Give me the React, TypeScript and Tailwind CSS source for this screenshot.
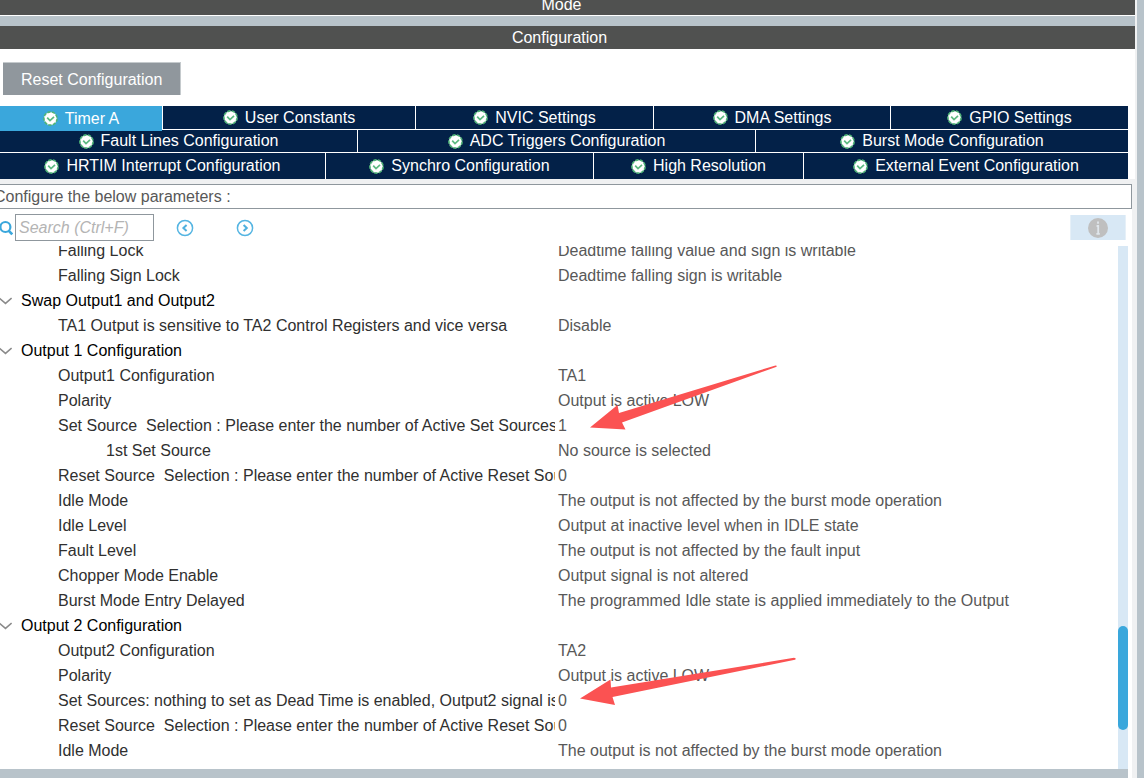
import { Fragment } from "react";
import clsx from "clsx";

type Tab = { label: string; size: string; active?: boolean };

const tabRows: { className: string; tabs: Tab[] }[] = [
  {
    className: "h-[23px]",
    tabs: [
      { label: "Timer A", size: "grow-[162]", active: true },
      { label: "User Constants", size: "grow-[252]" },
      { label: "NVIC Settings", size: "grow-[237]" },
      { label: "DMA Settings", size: "grow-[236]" },
      { label: "GPIO Settings", size: "grow-[237]" },
    ],
  },
  {
    className: "h-[22px]",
    tabs: [
      { label: "Fault Lines Configuration", size: "grow-[357]" },
      { label: "ADC Triggers Configuration", size: "grow-[397]" },
      { label: "Burst Mode Configuration", size: "grow-[372]" },
    ],
  },
  {
    className: "h-[26px]",
    tabs: [
      { label: "HRTIM Interrupt Configuration", size: "grow-[325]" },
      { label: "Synchro Configuration", size: "grow-[267]" },
      { label: "High Resolution", size: "grow-[209]" },
      { label: "External Event Configuration", size: "grow-[324]" },
    ],
  },
];

type Row = { name: string; value?: string; group?: boolean; nested?: boolean };

const rows: Row[] = [
  { name: "Falling Lock", value: "Deadtime falling value and sign is writable" },
  { name: "Falling Sign Lock", value: "Deadtime falling sign is writable" },
  { name: "Swap Output1 and Output2", group: true },
  { name: "TA1 Output is sensitive to TA2 Control Registers and vice versa", value: "Disable" },
  { name: "Output 1 Configuration", group: true },
  { name: "Output1 Configuration", value: "TA1" },
  { name: "Polarity", value: "Output is active LOW" },
  { name: "Set Source  Selection : Please enter the number of Active Set Sources", value: "1" },
  { name: "1st Set Source", value: "No source is selected", nested: true },
  { name: "Reset Source  Selection : Please enter the number of Active Reset Sources", value: "0" },
  { name: "Idle Mode", value: "The output is not affected by the burst mode operation" },
  { name: "Idle Level", value: "Output at inactive level when in IDLE state" },
  { name: "Fault Level", value: "The output is not affected by the fault input" },
  { name: "Chopper Mode Enable", value: "Output signal is not altered" },
  { name: "Burst Mode Entry Delayed", value: "The programmed Idle state is applied immediately to the Output" },
  { name: "Output 2 Configuration", group: true },
  { name: "Output2 Configuration", value: "TA2" },
  { name: "Polarity", value: "Output is active LOW" },
  { name: "Set Sources: nothing to set as Dead Time is enabled, Output2 signal is c", value: "0" },
  { name: "Reset Source  Selection : Please enter the number of Active Reset Sour", value: "0" },
  { name: "Idle Mode", value: "The output is not affected by the burst mode operation" },
];

function CheckBadge() {
  return (
    <svg viewBox="0 0 15 15" className="size-[15px] shrink-0" aria-hidden="true">
      <circle cx="7.5" cy="7.5" r="6.6" fill="#fff" stroke="#4fb477" strokeWidth="1.6" strokeDasharray="3.4 1.2" />
      <path d="M4.2 6.6 L7 9.6 L11 5.8" fill="none" stroke="#5cb980" strokeWidth="1.7" />
    </svg>
  );
}

function SearchIcon() {
  return (
    <svg viewBox="0 0 16 16" className="-ml-[3px] size-4 shrink-0" aria-hidden="true">
      <circle cx="8.4" cy="7" r="5" fill="none" stroke="#3aa7dc" strokeWidth="2.2" />
      <path d="M11.6 10.6 L15.2 14.4" stroke="#3aa7dc" strokeWidth="2.6" />
    </svg>
  );
}

function CircleArrow({ d }: { d: string }) {
  return (
    <svg viewBox="0 0 18 18" className="size-[18px]" aria-hidden="true">
      <circle cx="9" cy="9" r="7.6" fill="none" stroke="#55b5e2" strokeWidth="1.5" />
      <path d={d} fill="none" stroke="#4fb0de" strokeWidth="2" />
    </svg>
  );
}

function InfoIcon() {
  return (
    <svg viewBox="0 0 20 20" className="size-5" aria-hidden="true">
      <circle cx="10" cy="10" r="10" fill="#bfbfbf" />
      <path d="M10 3.4v2.4M8.6 8H10.2V15.6M8.4 15.8h3.4" fill="none" stroke="#e0e6eb" strokeWidth="1.8" />
    </svg>
  );
}

function Chevron() {
  return (
    <svg viewBox="0 0 14 8" className="-ml-0.5 h-2 w-3.5 shrink-0" aria-hidden="true">
      <path d="M1 1 L7.5 6.4 L13.6 1" fill="none" stroke="#8a8a8a" strokeWidth="1.5" />
    </svg>
  );
}

function Tabs() {
  return (
    <div role="tablist" className="mr-[7px] flex flex-col gap-px">
      {tabRows.map((row) => (
        <div key={row.tabs[0].label} className={clsx("flex gap-px", row.className)}>
          {row.tabs.map((tab) => (
            <button
              key={tab.label}
              type="button"
              role="tab"
              aria-selected={!!tab.active}
              className={clsx(
                "flex basis-0 items-center justify-center gap-[7px] whitespace-nowrap text-white",
                tab.size,
                tab.active ? "z-10 h-[25px] bg-[#3aa7dc]" : "bg-[#032148]"
              )}
            >
              <CheckBadge />
              {tab.label}
            </button>
          ))}
        </div>
      ))}
    </div>
  );
}

function Parameters() {
  return (
    <div className="relative grow overflow-hidden pb-1.5">
      <table className="-mt-2 w-full table-fixed border-collapse text-left">
        <colgroup>
          <col className="w-[558px]" />
          <col />
        </colgroup>
        <tbody>
          {rows.map((row, i) => (
            <Fragment key={i}>
              {row.group ? (
                <tr className="h-[25px]">
                  <th colSpan={2} scope="colgroup" className="p-0 font-normal text-black">
                    <div className="flex items-center gap-[9px]">
                      <Chevron />
                      {row.name}
                    </div>
                  </th>
                </tr>
              ) : (
                <tr className="h-[25px]">
                  <th scope="row" className="p-0 font-normal text-[#303030]">
                    <div
                      className={clsx(
                        "mr-[3px] overflow-hidden whitespace-pre",
                        row.nested ? "pl-[106px]" : "pl-[58px]"
                      )}
                    >
                      {row.name}
                    </div>
                  </th>
                  <td className="whitespace-nowrap p-0 text-[#585858]">{row.value}</td>
                </tr>
              )}
            </Fragment>
          ))}
        </tbody>
      </table>

      {/* pointers to the active source counts */}
      <svg
        viewBox="0 0 1118 523"
        className="pointer-events-none absolute left-0 top-0 h-[523px] w-[1118px]"
        fill="#fb5252"
        aria-hidden="true"
      >
        <path d="M590 181.5 L617.5 159 L619 167 L775.5 119.4 Q778 119.6 776 121 L622 176.5 L625.5 183.5 Z" />
        <path d="M580 452.5 L610.5 433.5 L611 441.5 L794 411.8 Q797 412.4 795 413.8 L612.5 451 L615 459 Z" />
      </svg>
    </div>
  );
}

export default function App() {
  return (
    <div className="flex min-h-screen overflow-hidden bg-[#b8c3ca] font-['Liberation_Sans',Arial,sans-serif] text-base leading-6">
      <main className="mr-[7px] flex min-w-0 grow flex-col bg-[#f0f1f2]">
        <div className="mr-0.5">
          <div className="flex h-4 items-end justify-center overflow-hidden border-b border-white bg-[#505150] pr-3 text-white">
            <h2 className="leading-5">Mode</h2>
          </div>
          <div className="h-2.5 bg-[#b8c3ca]" />
          <div className="flex h-[23px] items-end justify-center bg-[#505150] pr-4 text-white">
            <h2 className="leading-[22px]">Configuration</h2>
          </div>
          <div className="bg-white pt-[13px]">
            <button
              type="button"
              className="ml-[3px] flex h-[33px] items-center border-r border-t border-[#c5cacd] bg-[#90979d] px-[18px] pt-px text-white"
            >
              Reset Configuration
            </button>
            <div className="h-[11px]" />
            <Tabs />
          </div>
        </div>

        <div className="mr-[5px] mt-[5px] flex grow flex-col bg-white">
          <div className="flex h-[25px] items-center overflow-hidden border-y border-r border-[#8f979d] text-[#585858]">
            <p className="-ml-1.5">Configure the below parameters :</p>
          </div>

          <div className="mr-1 flex h-[37px] items-center">
            <label htmlFor="search" aria-label="Search" className="w-[15px]">
              <SearchIcon />
            </label>
            <input
              id="search"
              type="text"
              placeholder="Search (Ctrl+F)"
              className="h-[27px] w-[139px] border border-[#8f979d] px-[3px] italic outline-none placeholder:text-[#b4b4b4]"
            />
            <button type="button" aria-label="Previous" className="ml-[22px]">
              <CircleArrow d="M10.6 6 L7.4 9 L10.6 12" />
            </button>
            <button type="button" aria-label="Next" className="ml-[42px]">
              <CircleArrow d="M7.6 6 L10.8 9 L7.6 12" />
            </button>
            <button
              type="button"
              aria-label="Information"
              className="ml-auto mr-[2px] flex h-[25px] w-14 items-center justify-center border-x border-[#e6f0f8] bg-[#d8e8f5]"
            >
              <InfoIcon />
            </button>
          </div>

          <div className="mr-1 flex grow border-b-[9px] border-[#b8c3ca]">
            <Parameters />
            <div className="relative w-2.5 shrink-0 bg-[#d8e8f5]">
              <div className="absolute inset-x-0 top-[72.6%] h-1/5 rounded-full bg-[#3aa7dc]" />
            </div>
          </div>
        </div>
      </main>
    </div>
  );
}
